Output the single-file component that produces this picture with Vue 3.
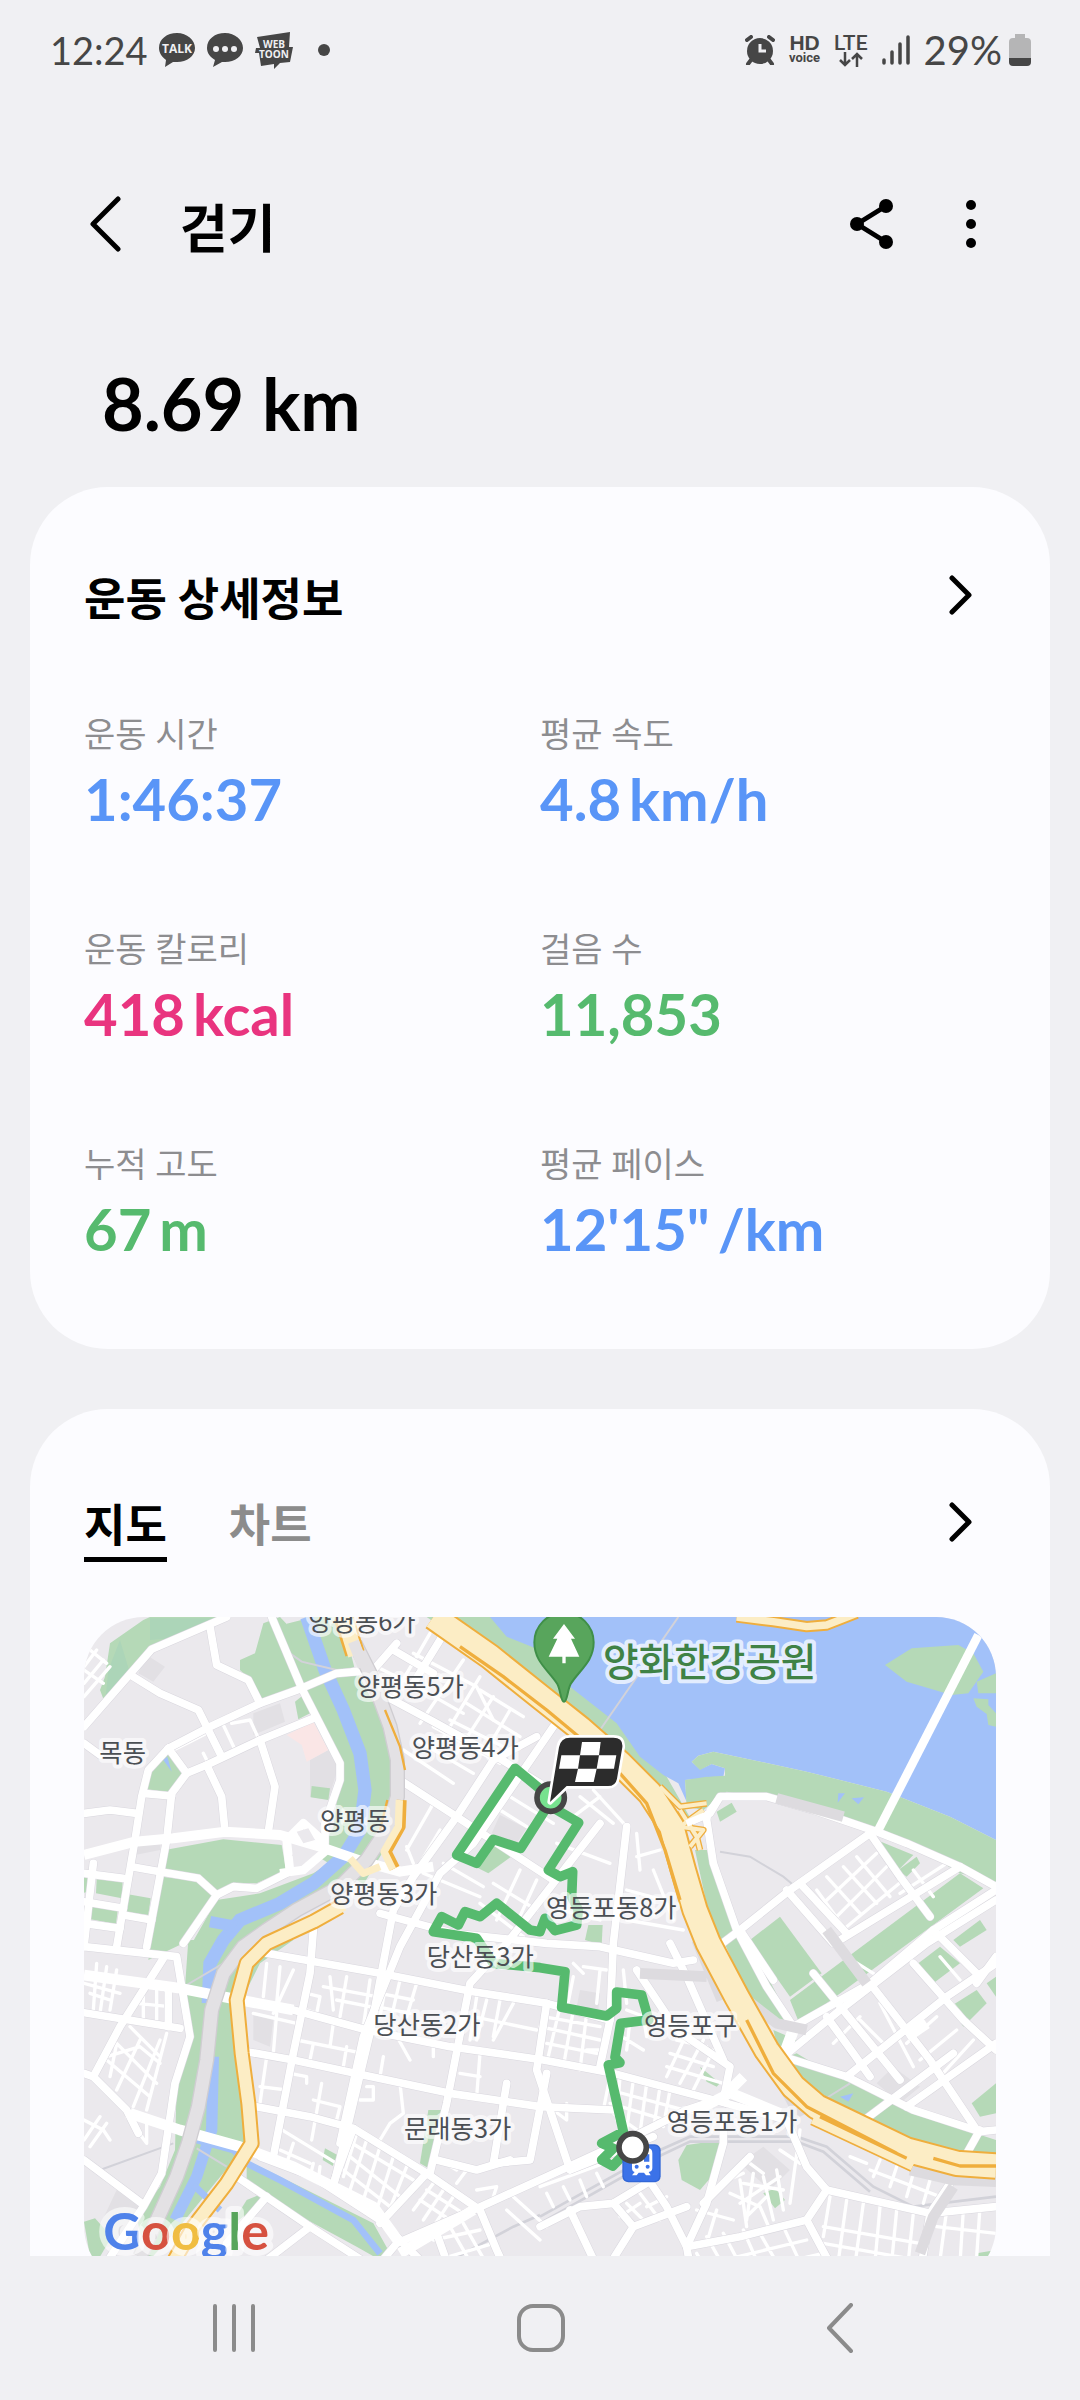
<script setup>
import { ref } from 'vue'

const stats = [
  { label: '운동 시간', value: '1:46:37', unit: '', tone: 'blue' },
  { label: '평균 속도', value: '4.8', unit: 'km/h', tone: 'blue' },
  { label: '운동 칼로리', value: '418', unit: 'kcal', tone: 'pink' },
  { label: '걸음 수', value: '11,853', unit: '', tone: 'green' },
  { label: '누적 고도', value: '67', unit: 'm', tone: 'green' },
  { label: '평균 페이스', value: '12\'15"', unit: '/km', tone: 'blue' },
]

const tabs = ['지도', '차트']
const activeTab = ref('지도')

const places = [
  { name: '양평동6가', x: 685, y: 63 },
  { name: '양평동5가', x: 830, y: 258 },
  { name: '양평동4가', x: 995, y: 440 },
  { name: '목동', x: 58, y: 456 },
  { name: '양평동', x: 720, y: 661 },
  { name: '양평동3가', x: 750, y: 880 },
  { name: '영등포동8가', x: 1398, y: 920 },
  { name: '당산동3가', x: 1040, y: 1068 },
  { name: '당산동2가', x: 880, y: 1272 },
  { name: '문래동3가', x: 972, y: 1584 },
  { name: '영등포구', x: 1692, y: 1274 },
  { name: '영등포동1가', x: 1760, y: 1562 },
]

// Wide white streets
const mainRoads = [
  'M12 350L215 118L440 21',
  'M390 50L410 165L505 210L540 280',
  'M575 21L665 235L780 460V510L735 640V700',
  'M265 415L380 355L540 280L665 235L770 190L830 185',
  'M265 415L320 490L275 550L260 690L200 1010',
  'M265 415L205 480L185 560L165 690L110 1010',
  'M320 490L380 465L540 390L700 325',
  'M160 200L240 250L355 300L425 440',
  'M540 390L585 530L565 665',
  'M380 465L425 560L435 665',
  'M12 610L90 600L170 610',
  'M12 400L60 435',
  'M40 760L12 1010', 'M12 790L130 805', 'M12 875L130 895', 'M130 915L215 930', 'M12 940L120 955',
  'M155 770L240 785L355 805L410 855L310 1000',
  'M410 855L460 830L530 835L630 785',
  'M190 550L275 558',
  'M12 1010L290 1040L330 1280L285 1420L245 1690L190 1790L85 1950',
  'M250 1045L120 1250L40 1400L140 1500L175 1570',
  'M12 1390L40 1400', 'M12 1650L185 1780', 'M12 1208L300 1255',
  'M210 1120L265 1135L265 1250',
  'M1110 21L1080 90L1000 220', 'M940 120L1060 190M950 100L880 180L820 185',
  'M1240 450L1130 620L1000 800L940 900L870 1270L760 1730',
  'M960 510L1130 620L1420 810', 'M920 260L1060 335L1250 440L1380 520',
  'M1370 380L1240 450', 'M1420 350L1180 700L1080 790L960 1010L850 1280L780 1600',
  'M1560 640L1280 1000L1170 1120L1100 1480L1050 1690',
  'M1640 650L1600 1000L1590 1230L1560 1370',
  'M900 910L1120 970L1400 1000L1560 1010L1780 1060L1840 1050',
  'M560 1030L900 1090L1180 1145L1400 1180L1590 1230',
  'M490 1170L640 1200L860 1260L1110 1310L1390 1350L1600 1390L1940 1480',
  'M500 1325L640 1350L850 1395L1110 1450L1380 1490L1600 1500',
  'M700 960L690 1090L640 1330L580 1640',
  'M530 1490L690 1520L820 1555L1040 1690L1200 1800L1250 1920L1300 2028',
  'M760 1720L820 1555', 'M540 1640L700 1700L900 1830L1020 1950',
  'M470 1700L690 1850L860 1960L940 2028',
  'M900 1840L1040 1690', 'M1180 1800L1400 1700L1640 1590L1820 1500L1940 1460',
  'M1180 1800L950 1900L900 1960', 'M1280 1420L1240 1660L1350 1650L1400 1390',
  'M1070 1650L1190 1680L1290 1650',
  'M1400 1180L1370 1380L1410 1500L1470 1680L1720 1580',
  'M1670 1080L1790 1260L1950 1370L1930 1470', 'M1770 1000L1820 1100L1930 1350',
  'M1700 1700L1760 1790L1820 1910L1880 1780L1930 1600L1930 1520',
  'M1940 1480L2120 1530L2180 1670L2240 1740L2180 1830L1980 1880L1820 1910',
  'M2240 1740L2550 1810L2748 1790', 'M2010 1640L1930 1720L1870 1780',
  'M1380 1850L1500 1790L1600 1780L1700 1720', 'M1470 1800L1560 1990', 'M1600 1780L1660 1850L1560 2010',
  'M1660 1850L1820 1790', 'M1820 1910L1840 2028', 'M2180 1830L2260 1980', 'M2550 1810L2520 1990L2748 1950',
  'M2550 1810L2610 1720L2700 1560', 'M1070 1870L1120 2010', 'M690 1850L560 1950', 'M560 1760L440 1900',
]

// Wide streets east of the expressway
const eastRoads = [
  'M1820 640L1890 610L1920 560L2060 560L2200 600L2390 665L2480 700L2640 770L2748 830',
  'M1880 630L1900 760L1970 960L2060 1130L2140 1250',
  'M2370 670L2130 840L1980 960L1900 1020',
  'M2370 670L2460 800L2550 920',
  'M2120 840L2260 1000', 'M2160 820L2300 970',
  'M2280 990L2640 770', 'M2140 1250L2370 1120L2560 960L2748 840',
  'M1980 960L2080 1110', 'M2370 1120L2550 1350L2690 1560',
  'M2110 1340L2280 1200L2540 1000L2748 870', 'M2110 1340L2300 1400L2500 1500L2700 1565L2748 1560',
  'M2300 1400L2600 1160L2748 1060', 'M2500 1060L2650 1230L2748 1320',
  'M2480 1490L2748 1300', 'M2240 1220L2320 1330L2370 1400', 'M2700 1100L2560 960',
  'M2340 1540L2620 1330', 'M2690 1120L2748 1040', 'M2200 1090L2460 1410',
]

const smallRoads = [
  'M430 345L470 430M455 340L510 330L540 395M280 420L330 395L380 370M370 430L390 470',
  'M890 170L1010 230L1150 310M1000 130L1190 230L1240 330M1050 70L940 260M1150 150L1020 340M1200 200L1080 400M1240 260L1130 430',
  'M970 420L1120 520M1010 390L1180 490M1060 350L1260 460M1110 330L1290 420M1160 280L1320 380M1200 240L1330 320M1290 300L1220 420',
  'M980 720L1060 580L1100 600M1000 760L980 710M1080 660L1020 760M1030 790L1200 860M1090 760L1210 830',
  'M1270 700L1370 780M1290 560L1420 640M1260 600L1340 650M1240 820L1370 900M1200 880L1330 980M1320 780L1250 930M1370 810L1310 940',
  'M1430 700L1590 760M1440 900L1560 930M1500 560L1600 640M1540 540L1640 650M1480 620L1560 560M1520 680L1560 640',
  'M1670 670L1680 780M1670 740L1740 720M1720 780L1780 930M1640 840L1750 870M1640 930L1810 960',
  'M560 1060L550 1160M600 1070L590 1180M640 1080L580 1210M520 1210L650 1240M590 1210L580 1330M680 1150L720 1160L710 1210L680 1200',
  'M750 1100L760 1200M800 1100L780 1220M870 1110L850 1250M730 1130L890 1160M770 1170L870 1190M760 1240L750 1310M700 1300L690 1350M800 1310L790 1370M650 1290L850 1330',
  'M560 1340L540 1480M630 1390L680 1400V1420M725 1420L695 1590M540 1430L620 1440M590 1550L770 1660M700 1470L780 1490L770 1530M600 1620L690 1660M640 1600L620 1660M700 1660L690 1700M720 1670L715 1710',
  'M910 1340L900 1400M940 1260L990 1350M960 1420L970 1510L930 1540L900 1590M860 1430H880V1470H840M1060 1290V1340M1140 1390L1200 1400M1200 1330L1190 1460',
  'M920 1110L900 1220M960 1110L930 1240M1010 1120L980 1220M900 1150L1000 1170M890 1190L990 1210M1190 1160L1170 1290M1220 1170L1190 1290M1260 1170L1240 1280M1180 1220L1370 1260M1300 1180L1240 1290',
  'M830 1570L790 1700M860 1590L810 1740M900 1610L850 1770M940 1640L890 1800M980 1670L920 1820M800 1590L1000 1710M810 1640L960 1760M790 1680L930 1790',
  'M1060 1720L1000 1800M1090 1740L1030 1830M1120 1760L1060 1850M1020 1770L1110 1830M1040 1740L1150 1810M1080 1650L1130 1680M1160 1680L1130 1720M1190 1740L1250 1730L1240 1760',
  'M1300 1760L1400 1850M1280 1800L1380 1890M1060 1890L1200 1860M1110 1850L1190 1990M1150 1840L1230 1980M1040 1960L1240 1900M1030 1990L1250 1950',
  'M12 1120L120 1150M50 1060L40 1200M80 1070L60 1210M110 1080L90 1200M30 1100L100 1110M30 1150L90 1170M190 1130V1240M230 1130V1240M170 1180L270 1190',
  'M150 1250L240 1340M110 1300L230 1420M80 1350L210 1460M80 1340L180 1310L240 1360M110 1440L180 1290M160 1490L240 1290M200 1500L260 1270M110 1300L90 1400',
  'M12 1530L70 1560L90 1590M12 1590L60 1520M30 1610L80 1540M140 1520L200 1600V1520',
  'M12 170L50 120M12 220L70 150M12 260L90 170M30 120L80 160M12 180L70 220',
  'M1480 1100L1460 1200M1510 1070L1580 1080M1560 1080L1550 1180M1480 1060L1510 1090',
  'M1380 1250L1560 1290M1400 1300L1550 1330M1440 1190L1400 1360M1480 1200L1450 1370M1520 1210L1500 1380M1390 1220L1560 1250',
  'M1630 1080L1640 1180M1640 1200L1800 1260M1680 1160L1700 1280M1610 1270L1690 1320M1650 1230L1640 1320M1560 1320H1520',
  'M1760 1400L1830 1250M1800 1420L1870 1290M1840 1440L1900 1320M1760 1370L1930 1420M1770 1330L1900 1370M1790 1290L1880 1310',
  'M1590 1400L1570 1500M1620 1400L1610 1530M1660 1410L1640 1560M1700 1420L1680 1570M1740 1430L1720 1560M1770 1440L1750 1550M1590 1440L1850 1510M1590 1480L1790 1540M1600 1510L1700 1580',
  'M1400 1750L1420 1790M1450 1730L1470 1770M1500 1710L1520 1760M1550 1690L1570 1730M1380 1730L1600 1650M1420 1500L1460 1530V1480',
  'M1640 1780L1700 1840M1680 1750L1740 1830M1620 1820L1680 1780M1700 1790L1760 1760M1850 1800L1960 1830M1900 1730L1990 1690M1950 1750L2040 1790L2070 1860M1910 1800L1880 1900M1980 1710L2000 1850',
  'M2010 1660L2050 1690M1990 1720L2110 1740M2020 1690L2000 1830M2050 1700L2080 1830M2090 1680L2110 1800M1980 1780L2100 1700M2000 1820L2060 1760M2100 1620L2160 1660',
  'M2160 1560L2130 1780M2250 1760L2230 1880M2300 1770L2270 1990M2350 1780L2320 2000M2400 1790L2380 2010M2450 1800L2430 2010M2500 1810L2480 2000M2230 1850L2520 1900M2230 1900L2510 1950M2260 1950L2490 1990',
  'M1850 1930L1900 2020M1880 1880L1960 2020M1930 1870L2010 2020M1990 1860L2060 2020M2040 1870L2120 2010M2110 1850L2180 2000M1850 1970L2180 1890M1880 2010L2230 1930',
  'M2570 1850L2748 1870M2600 1800L2580 1950M2650 1800L2640 1960M2700 1790L2690 1940',
  'M2400 1650L2380 1700M2450 1670L2430 1730M2500 1690L2480 1760M2550 1710L2530 1780M2370 1680L2580 1760M2310 1640L2360 1660',
  'M2210 840L2290 950M2240 800L2340 910M2290 770L2390 880M2330 740L2430 860M2230 880L2390 730M2270 920L2430 760M2300 950L2470 810',
  'M2500 780L2560 860M2460 850L2600 760M2380 1090L2300 1040M2460 1250L2400 1160M2570 1220L2480 1300M2630 1260L2520 1350M2680 1290L2580 1400M2260 1300L2340 1220',
  'M2400 1180L2500 1370M2420 1310L2340 1230M2600 1160L2700 1280M2640 1110L2580 1040',
]

const parks = [
  'M90 100L190 30L210 21H420L240 105L205 110L150 190L75 280L60 240L75 200Z',
  'M550 40L600 21L760 190L600 250L540 270L505 205L480 180V150L525 130Z',
  'M645 275L670 255L690 310L655 328Z',
  'M262 430L305 490L275 548L200 538L215 480Z',
  'M255 720L430 688L605 705L618 780L530 820L460 818L410 855L350 795L248 785Z',
  'M245 800L345 812L402 862L310 1000L205 1050Z',
  'M410 870L540 850L700 790L780 740L830 790L640 900L500 1000L330 1010Z',
  'M695 528L750 535L745 570L692 562Z',
  'M12 795L35 800L25 845L12 848Z', 'M50 808L128 815L125 865L48 850Z', 'M36 872L115 885L108 942L32 928Z', 'M140 852L212 865L205 915L132 905Z',
  'M1242 700L1300 735L1225 790L1195 775Z', 'M1525 945L1568 945L1565 1005L1515 990Z',
  'M325 990H640L540 1060L480 1180L510 1590L470 1640L290 1860L200 1960L170 1820L240 1730L285 1620L290 1420L330 1280L315 1130Z',
  'M12 1835L45 1825L95 1880L60 1940H30Z',
  'M500 1650L640 1720L880 1840L930 1930L900 1950L830 1910L700 1840L500 1730Z',
  'M735 1615L772 1635L758 1668L728 1650Z', 'M1045 1500L1090 1500L1055 1680L1020 1660Z', 'M500 1770L550 1750L530 1790L450 1850Z',
  'M1860 1370L1920 1420L1910 1430L1880 1415Z',
  'M1820 1605L1925 1590L1920 1670L1860 1740L1805 1710L1795 1650Z', 'M2050 1750L2085 1735L2115 1770L2085 1795Z',
  'M2690 1930L2748 1920V2028H2690Z',
]

const eastParks = [
  'M1845 720L1885 720L1940 900L1990 1000L1905 1000Z',
  'M1910 605L1955 578L1970 605L1920 635Z',
  'M1920 970L2010 1000L2110 1190L2150 1250L2100 1240L2010 1170Z',
  'M2010 990L2100 920L2225 1090L2130 1160Z', 'M2130 1170L2640 790L2710 835L2240 1180L2160 1245Z',
  'M2390 690L2500 735L2450 785Z', 'M2455 780L2510 740L2520 760L2480 800Z',
  'M2515 1060L2580 1010L2640 1060L2560 1120Z', 'M2610 1190L2690 1140L2720 1180L2650 1250Z', 'M2620 990L2700 930L2720 960L2640 1010Z',
  'M2100 1350L2150 1330L2250 1390L2500 1510L2748 1590V1640L2600 1625L2500 1590L2200 1440Z',
  'M2675 1480L2748 1420V1510L2700 1520Z', 'M2080 1260L2150 1290L2100 1340Z', 'M2720 1120L2748 1100V1160Z',
]

const routePath =
  'M1412 563L1305 475L1130 735L1190 760L1240 688L1322 715L1405 585L1496 638L1405 780L1440 800L1478 785L1475 860L1495 900L1490 945L1425 962L1395 925L1380 965L1350 960L1250 880L1200 920L1155 905L1135 945L1085 920L1060 965L1190 985L1240 1060L1380 1073L1455 1085L1445 1192L1580 1218L1610 1195V1146L1685 1155L1706 1230L1622 1240L1605 1342L1620 1358L1585 1365L1630 1565L1565 1600L1600 1615L1565 1650L1598 1668L1645 1620'
</script>

<template>
  <div class="screen">
    <header class="status">
      <div class="status-side">
        <span class="status-text">12:24</span>
        <svg class="bubble" width="38" height="36" viewBox="0 0 38 36" role="img" aria-label="TALK">
          <path d="M19 1C9 1 1 7 1 16c0 5 3 9 7 12l-1 7 8-5h4c10 0 18-6 18-14S29 1 19 1Z" fill="#464646" />
          <text x="19" y="21" text-anchor="middle" class="talk">TALK</text>
        </svg>
        <svg class="bubble" width="38" height="36" viewBox="0 0 38 36" aria-hidden="true">
          <path d="M19 1C9 1 1 7 1 16c0 5 3 9 8 12l-2 7 9-5h3c10 0 18-6 18-14S29 1 19 1Z" fill="#464646" />
          <g fill="#f0f0f3"><circle cx="10" cy="17" r="3" /><circle cx="19" cy="17" r="3" /><circle cx="28" cy="17" r="3" /></g>
        </svg>
        <svg class="bubble" width="40" height="38" viewBox="0 0 40 38" role="img" aria-label="WEBTOON">
          <path d="M3 6 36 1 35 16h4l-3 15-10 1-6 6v-5L7 35 5 22H1l1-5h4Z" fill="#464646" />
          <g class="toon"><text x="20" y="17" text-anchor="middle">WEB</text><text x="20" y="27" text-anchor="middle">TOON</text></g>
        </svg>
        <span class="status-dot"></span>
      </div>
      <div class="status-side">
        <svg width="30" height="30" viewBox="0 0 30 30" aria-hidden="true">
          <circle cx="15" cy="16" r="13" fill="#464646" />
          <path d="M2 5 6 2M28 5l-4-3M6 25l-3 4M24 25l3 4" stroke="#464646" stroke-width="4" stroke-linecap="round" />
          <path d="M15 9v7h6" stroke="#f0f0f3" stroke-width="3" fill="none" />
        </svg>
        <span class="hd"><b>HD</b><span>voice</span></span>
        <span class="lte">
          <b>LTE</b>
          <svg width="24" height="15" viewBox="0 0 24 15" aria-hidden="true">
            <path d="M6 0v13M1 8l5 5 5-5M18 15V2M13 7l5-5 5 5" stroke="#464646" stroke-width="2.5" fill="none" />
          </svg>
        </span>
        <svg width="28" height="30" viewBox="0 0 28 30" aria-hidden="true">
          <path d="M2 25v3M10 17v11M18 9v19M26 2v26" stroke="#464646" stroke-width="3.5" stroke-linecap="round" />
        </svg>
        <span class="charge">
          <span class="status-text">29%</span>
          <svg width="22" height="32" viewBox="0 0 22 32" aria-hidden="true">
            <path d="M6 0h10v4h2q4 0 4 4v16H0V8q0-4 4-4h2Z" fill="#b5b5b6" />
            <path d="M0 24h22v4q0 4-4 4H4q-4 0-4-4Z" fill="#464646" />
          </svg>
        </span>
      </div>
    </header>

    <nav class="appbar">
      <button type="button" class="icon-btn" aria-label="뒤로">
        <svg width="32" height="56" viewBox="0 0 32 56"><path d="M28 3 3 28l25 25" /></svg>
      </button>
      <h1>걷기</h1>
      <button type="button" class="icon-btn" aria-label="공유">
        <svg width="44" height="50" viewBox="0 0 44 50">
          <path d="M36 7 7 25l29 18" />
          <g fill="#000" stroke="none"><circle cx="36" cy="7" r="7" /><circle cx="7" cy="25" r="7" /><circle cx="36" cy="43" r="7" /></g>
        </svg>
      </button>
      <button type="button" class="icon-btn more" aria-label="더보기">
        <svg width="10" height="48" viewBox="0 0 10 48">
          <g fill="#000" stroke="none"><circle cx="5" cy="5" r="5" /><circle cx="5" cy="24" r="5" /><circle cx="5" cy="43" r="5" /></g>
        </svg>
      </button>
    </nav>

    <main class="content">
      <p class="distance">8.69 km</p>

      <section class="card details">
        <div class="card-head">
          <h2>운동 상세정보</h2>
          <button type="button" class="icon-btn" aria-label="상세정보 열기">
            <svg width="24" height="40" viewBox="0 0 24 40"><path d="M3 3l17 17L3 37" /></svg>
          </button>
        </div>
        <dl class="stats">
          <div v-for="s in stats" :key="s.label" class="stat">
            <dt>{{ s.label }}</dt>
            <dd :class="s.tone">{{ s.value }}<span v-if="s.unit" class="unit">{{ s.unit }}</span></dd>
          </div>
        </dl>
      </section>

      <section class="card route">
        <div class="card-head">
          <div class="tabs" role="tablist">
            <button
              v-for="t in tabs"
              :key="t"
              type="button"
              role="tab"
              class="tab"
              :class="{ active: t === activeTab }"
              :aria-selected="t === activeTab"
              @click="activeTab = t"
            >{{ t }}</button>
          </div>
          <button type="button" class="icon-btn" aria-label="지도 열기">
            <svg width="24" height="40" viewBox="0 0 24 40"><path d="M3 3l17 17L3 37" /></svg>
          </button>
        </div>

        <svg class="map" viewBox="12 21 2736 2007" preserveAspectRatio="xMidYMin slice" role="img" aria-label="운동 경로 지도">
          <rect x="12" y="21" width="2736" height="2007" fill="#ebe9ed" />

          <g fill="#e2e0e4">
            <path d="M200 135L255 170L220 215L175 190ZM520 310L600 280L615 335L520 375ZM690 450L745 420L775 470L745 570L690 560ZM170 690L245 680L240 720L165 735ZM1260 615L1340 655L1310 700L1235 670ZM520 1215L580 1230L570 1310L520 1290ZM20 1930L110 1740L190 1790L120 1900Z" />
            <path d="M1980 1660L2050 1610L2130 1680L2070 1740ZM2390 1420L2440 1370L2520 1430L2460 1480ZM1500 1140L1560 1150L1555 1200L1490 1190Z" />
          </g>
          <path d="M620 375L700 335L745 420L680 455L665 405Z" fill="#fae6e6" />
          <g fill="#b5d9b7"><path v-for="d in parks" :key="d" :d="d" /></g>
          <path d="M700 21L745 200L820 340L850 450L855 560L840 680L780 780" fill="none" stroke="#b5d9b7" stroke-width="165" />
          <path d="M120 90L150 190L75 280L85 180ZM210 25H420L330 80L210 90Z" fill="#acd5b8" />

          <!-- Streams and the Han river -->
          <g fill="none" stroke="#a2c1f9">
            <path d="M680 21L735 180L790 300L840 430L855 540L840 660L790 740L700 820L600 880L480 930L430 990L390 1060L385 1180" stroke-width="40" />
            <path d="M390 935L470 950M400 1340L395 1560L350 1700L285 1830" stroke-width="34" />
            <path d="M350 1590L460 1620L500 1660L600 1710L820 1830L900 1930M340 1725L420 1800" stroke-width="20" />
          </g>
          <path d="M1040 21H1240L1380 120L1480 230L1620 340L1760 500L1840 640L1700 500L1380 260Z" fill="#b5d9b7" />
          <path d="M1230 21L1280 80L1380 120L1470 230L1610 340L1680 440L1750 495L1795 520L1820 575L1815 510L1930 500L1935 475L1895 462L1860 478L1835 455L1855 437L1900 425L2180 485L2420 545L2610 620L2748 690V21Z" fill="#a2c1f9" />
          <path d="M1820 590L1815 510L1880 500L1935 497V475L1895 462L1860 480L1835 455L1855 437L1900 425L2180 485L2420 545L2610 620L2748 690V815L2640 790L2470 690L2200 590L1940 545L1870 600Z" fill="#b5d9b7" />
          <path d="M1880 500L1900 487L1925 495ZM2275 550L2295 550L2273 578ZM2315 565L2352 562L2335 583Z" fill="#a2c1f9" />
          <path d="M2415 165L2495 115L2635 105L2680 130L2710 185L2665 250L2615 255L2480 215ZM2690 215L2748 190V250L2695 250ZM2680 265L2725 268V285L2748 310V350L2725 345L2720 312L2690 290Z" fill="#b5d9b7" />
          <g fill="#b5d9b7"><path v-for="d in eastParks" :key="d" :d="d" /></g>
          <path d="M250 450L262 440L275 485ZM2280 1460L2320 1450L2305 1475Z" fill="#a2c1f9" />

          <!-- Railway and tunnel lines -->
          <g fill="none" stroke="#d2d2d9" stroke-width="8">
            <path d="M1380 1820L1740 1620L1830 1580H2150L2240 1610L2380 1730L2500 1790L2748 1760M1380 1840L1745 1635L1830 1595H2150L2230 1625L2370 1745M1040 1990L1300 1850L1380 1815" />
            <path d="M1920 725L2010 740L2110 800L2140 825M60 1680L280 1600M630 130L665 155L770 180M1795 21L1560 360M320 1125L430 1060M350 1615L440 1670M2230 1470L2310 1420" stroke-width="6" />
          </g>

          <g fill="none" stroke="#fff" stroke-linejoin="round" stroke-linecap="round">
            <path v-for="d in smallRoads" :key="d" :d="d" stroke-width="10" />
          </g>
          <g fill="none" stroke="#d9d7de" stroke-linejoin="round" stroke-linecap="round" stroke-width="26">
            <path v-for="d in mainRoads" :key="d" :d="d" />
            <path v-for="d in eastRoads" :key="d" :d="d" />
          </g>
          <g fill="none" stroke="#fff" stroke-linejoin="round" stroke-linecap="round" stroke-width="23">
            <path v-for="d in mainRoads" :key="d" :d="d" />
            <path v-for="d in eastRoads" :key="d" :d="d" />
          </g>
          <g fill="none" stroke="#fff" stroke-linejoin="round">
            <path d="M12 735L165 695L280 685L435 665L600 675L720 710L850 755L960 785L1060 770" stroke-width="30" />
            <path d="M630 785L620 690L670 640L715 680L740 720L670 780L600 790" stroke-width="26" />
            <path d="M12 1095L300 1135L480 1170L640 1200M150 1510L300 1560L480 1610L640 1670L880 1790L960 1900" stroke-width="32" />
            <path d="M2695 75L2390 670" stroke-width="26" />
            <path d="M1850 1500L1930 1460L1990 1400M1930 1440L2100 1510M960 1930L1180 1800" stroke-width="32" />
            <path d="M2140 1260L2110 1340L2070 1360M2480 1280L2540 1240" stroke-width="34" />
          </g>
          <g fill="#ebe9ed"><path d="M650 665L685 655L705 690L670 700ZM635 735L670 720L685 735L655 755Z" /></g>

          <!-- Elevated road -->
          <g fill="none" stroke-linejoin="round">
            <path d="M825 100L875 200L930 350L952 450L952 560L920 660L860 750L780 830L650 900L560 960L490 1010L430 1090L395 1200L380 1350L355 1490L325 1600L290 1700L240 1810L180 1940" stroke="#cfcdd1" stroke-width="46" />
            <path d="M825 100L875 200L930 350L952 450L952 560L920 660L860 750L780 830L650 900L560 960L490 1010L430 1090L395 1200L380 1350L355 1490L325 1600L290 1700L240 1810L180 1940" stroke="#e3e1e4" stroke-width="38" />
            <path d="M1850 990L1925 1170M1990 1190L2060 1330L2160 1520M2000 1170L2090 1240L2180 1260M2490 1680L2620 1710L2748 1715M2620 1730L2560 1820L2520 1930M2240 960L2360 1120M1680 1090L1880 1100M2090 565L2290 620" stroke="#dddbdf" stroke-width="32" />
          </g>

          <!-- Expressways -->
          <g fill="none" stroke-linejoin="round">
            <g stroke="#efae3d">
              <path d="M790 21L825 130" stroke-width="60" />
              <path d="M915 300L960 410L975 480M922 570L900 660" stroke-width="7" />
              <path d="M965 570L962 650L920 725L945 775" stroke-width="30" />
              <path d="M780 890L700 935L560 1000L500 1060L470 1170L485 1330L505 1480L515 1600L440 1720L340 1850L240 2028" stroke-width="48" />
              <path d="M1970 21L2080 35L2180 50L2240 45L2330 10" stroke-width="34" />
              <path d="M1060 21L1230 140L1380 260L1500 355L1620 460L1710 550L1775 650L1810 780L1845 900L1885 1000L1970 1160L2060 1320L2140 1430L2210 1490L2480 1620L2630 1660L2748 1668" stroke-width="82" />
              <path d="M2200 1525L2500 1665" stroke-width="44" />
              <path d="M1740 530L1800 590L1880 580M1800 600L1850 680L1860 720M1870 600L1800 650L1870 660L1830 710" stroke-width="20" />
            </g>
            <g stroke="#fcedc5">
              <path d="M790 15L827 136" stroke-width="46" />
              <path d="M958 570L955 650L912 725L938 778M810 745L850 790L900 770" stroke-width="22" />
              <path d="M790 885L700 935L560 1000L500 1060L470 1170L485 1330L505 1480L515 1600L440 1720L340 1850L240 2028" stroke-width="36" />
              <path d="M1970 21L2080 35L2180 50L2240 45L2330 10" stroke-width="22" />
              <path d="M1060 21L1230 140L1380 260L1500 355L1620 460L1710 550L1775 650L1810 780L1845 900L1885 1000L1970 1160L2060 1320L2140 1430L2210 1490L2480 1620L2630 1660L2748 1668" stroke-width="70" />
              <path d="M2200 1525L2500 1665" stroke-width="34" />
              <path d="M1740 530L1800 590L1880 580M1800 600L1850 680L1860 720M1870 600L1800 650L1870 660L1830 710" stroke-width="12" />
            </g>
            <path d="M1140 110L1270 200L1400 300L1520 400M1620 490L1700 580L1755 720L1800 870M2000 1230L2080 1390L2180 1490L2450 1630M2220 1520L2480 1645M2560 1645L2640 1668H2748" stroke="#efae3d" stroke-width="10" />
            <path d="M820 95L850 170" stroke="#e3e1e4" stroke-width="34" />
            <path d="M1880 630L1890 600L1920 560M1820 640L1890 610" stroke="#fff" stroke-width="20" />
          </g>

          <!-- Recorded track -->
          <path :d="routePath" fill="none" stroke="#56ba6e" stroke-width="29" stroke-linejoin="round" />

          <g class="place">
            <text v-for="p in places" :key="p.name" :x="p.x" :y="p.y">{{ p.name }}</text>
          </g>

          <!-- Park pin -->
          <path d="M1452 275C1442 275 1442 240 1432 222C1405 180 1363 155 1363 97A89 89 0 0 1 1541 97C1541 155 1498 180 1472 222C1462 240 1462 275 1452 275Z" fill="#58a55c" stroke="#3f8f48" stroke-width="6" />
          <path d="M1452 42L1485 86H1473L1498 140H1457V160H1447V140H1406L1432 86H1419Z" fill="#fff" />
          <text class="park" x="1569" y="197">양화한강공원</text>

          <!-- Station -->
          <rect x="1627" y="1603" width="115" height="114" rx="18" fill="#3367d6" />
          <rect x="1631" y="1607" width="107" height="106" rx="15" fill="#3b72e8" />
          <path d="M1656 1622Q1656 1615 1668 1615H1704Q1717 1615 1717 1630V1674Q1717 1685 1706 1686L1712 1696H1698L1692 1688H1676L1670 1696H1656L1664 1686Q1656 1684 1656 1674Z" fill="#fff" />
          <path d="M1664 1633H1680V1655H1664ZM1692 1633H1708V1655H1692Z" fill="#3b72e8" />
          <circle cx="1670" cy="1670" r="6" fill="#3b72e8" /><circle cx="1703" cy="1670" r="6" fill="#3b72e8" />
          <circle cx="1658" cy="1612" r="41" fill="#fff" stroke="#464646" stroke-width="17" />

          <!-- Finish flag -->
          <circle cx="1412" cy="563" r="41" fill="#77e28f" stroke="#464646" stroke-width="17" />
          <path d="M1410 576L1437 412Q1442 383 1470 383H1600Q1630 383 1627 412L1611 506Q1607 528 1584 528H1460Z" fill="#2c2c2c" stroke="#fff" stroke-width="16" stroke-linejoin="round" paint-order="stroke" />
          <path d="M1506 396H1562L1557 436H1500ZM1444 436H1500L1494 476H1437ZM1557 436H1609L1602 476H1550ZM1494 476H1550L1541 516H1485Z" fill="#fff" />

          <text class="google" x="70" y="1921"><tspan fill="#4f82ea">G</tspan><tspan fill="#d65140">o</tspan><tspan fill="#f0bd42">o</tspan><tspan fill="#4f82ea">g</tspan><tspan fill="#58a55c">l</tspan><tspan fill="#d65140">e</tspan></text>
        </svg>
      </section>
    </main>

    <nav class="navbar">
      <button type="button" class="icon-btn nav-btn" aria-label="최근 앱">
        <svg width="44" height="48" viewBox="0 0 44 48"><path d="M3 2v44M22 2v44M41 2v44" /></svg>
      </button>
      <button type="button" class="icon-btn nav-btn" aria-label="홈">
        <svg width="48" height="48" viewBox="0 0 48 48"><rect x="2" y="2" width="44" height="44" rx="14" /></svg>
      </button>
      <button type="button" class="icon-btn nav-btn" aria-label="이전">
        <svg width="36" height="50" viewBox="0 0 36 50"><path d="M25 2 3 25l22 23" /></svg>
      </button>
    </nav>
  </div>
</template>

<style>
body {
  margin: 0;
  background: #f0f0f3;
}
</style>

<style scoped>
.screen {
  display: flex;
  flex-direction: column;
  height: 100vh;
  overflow: hidden;
  background: #f0f0f3;
  color: #000;
  font-family: Lato, "Noto Sans CJK KR", sans-serif;
}
h1, h2, p, dl, dd { margin: 0; }
svg { display: block; flex: none; }

.status {
  display: flex;
  justify-content: space-between;
  align-items: center;
  flex: none;
  height: 100px;
  padding: 0 49px 0 50px;
  color: #464646;
}
.status-side { display: flex; align-items: center; gap: 14px; }
.status-side:first-child { gap: 10px; }
.status-text { font-size: 38px; line-height: 48px; }
.status-dot {
  width: 12px;
  height: 12px;
  margin-left: 14px;
  border-radius: 50%;
  background: #464646;
}
.talk { font: bold 12px "Open Sans", sans-serif; fill: #f0f0f3; }
.toon { font: bold 10px "Open Sans", sans-serif; fill: #f0f0f3; }
.hd, .lte { display: flex; flex-direction: column; align-items: center; }
.hd b { font: bold 21px/16px "Liberation Sans", sans-serif; }
.hd span { font: bold 13px/14px Roboto, sans-serif; }
.lte b { font: 500 21px/18px Roboto, sans-serif; }
.charge { display: flex; align-items: center; gap: 7px; }
.charge .status-text { font-size: 40px; }

.icon-btn {
  display: flex;
  align-items: center;
  justify-content: center;
  padding: 0;
  border: 0;
  background: none;
}
.icon-btn svg {
  fill: none;
  stroke: #000;
  stroke-width: 5;
  stroke-linecap: round;
  stroke-linejoin: round;
}

.appbar {
  display: flex;
  align-items: center;
  flex: none;
  height: 120px;
  margin: 64px 104px 0 90px;
}
.appbar h1 {
  flex: 1;
  padding: 8px 0 0 58px;
  font-size: 52px;
  line-height: 64px;
  font-weight: 700;
}
.appbar .more { margin-left: 72px; }

.content {
  flex: 1;
  min-height: 0;
  overflow: hidden;
}
.distance {
  padding: 75px 102px 40px;
  font-size: 72px;
  line-height: 88px;
  font-weight: 700;
}
.card {
  margin: 0 30px 60px;
  padding: 72px 54px 0;
  border-radius: 78px;
  background: #fcfcff;
}
.details { padding-bottom: 80px; }
.card-head {
  display: flex;
  align-items: center;
  justify-content: space-between;
  height: 72px;
  padding-right: 23px;
}
.card-head h2, .tab {
  font-size: 45px;
  line-height: 64px;
  font-weight: 700;
}
.card-head h2 { padding-top: 8px; }
.stats {
  display: grid;
  grid-template-columns: 1fr 1fr;
  row-gap: 85px;
  padding-top: 78px;
}
.stat dt {
  color: #8d8d90;
  font-size: 34px;
  line-height: 50px;
}
.stat dd {
  font-size: 58px;
  line-height: 80px;
  font-weight: 700;
}
.unit { margin-left: 8px; }
.blue { color: #5995f7; }
.pink { color: #e9347f; }
.green { color: #56ba6e; }

.route { padding-bottom: 60px; }
.route .card-head { margin-bottom: 59px; padding-top: 5px; }
.tabs { display: flex; gap: 62px; }
.tab {
  padding: 10px 0 0;
  border: 0;
  border-bottom: 5px solid transparent;
  background: none;
  color: #8c8c8c;
  font-family: inherit;
}
.tab.active { border-color: #000; color: #000; }

.map {
  width: 100%;
  height: auto;
  aspect-ratio: 912 / 669;
  border-radius: 60px;
}
.place text {
  font: 400 76px "Noto Sans CJK KR", sans-serif;
  fill: #4b4f54;
  stroke: rgba(255, 255, 255, 0.65);
  stroke-width: 24px;
  stroke-linejoin: round;
  paint-order: stroke;
}
.park {
  font: 500 116px "Noto Sans CJK KR", sans-serif;
  fill: #3f8246;
  stroke: rgba(240, 246, 255, 0.85);
  stroke-width: 24px;
  stroke-linejoin: round;
  paint-order: stroke;
}
.google {
  font: 700 156px Lato, sans-serif;
  stroke: rgba(255, 255, 255, 0.6);
  stroke-width: 36px;
  stroke-linejoin: round;
  paint-order: stroke;
}

.navbar {
  display: flex;
  justify-content: space-between;
  align-items: center;
  flex: none;
  height: 144px;
  padding: 0 218px 0 212px;
}
.nav-btn svg { stroke: #8b8b8b; stroke-width: 4; }
</style>
